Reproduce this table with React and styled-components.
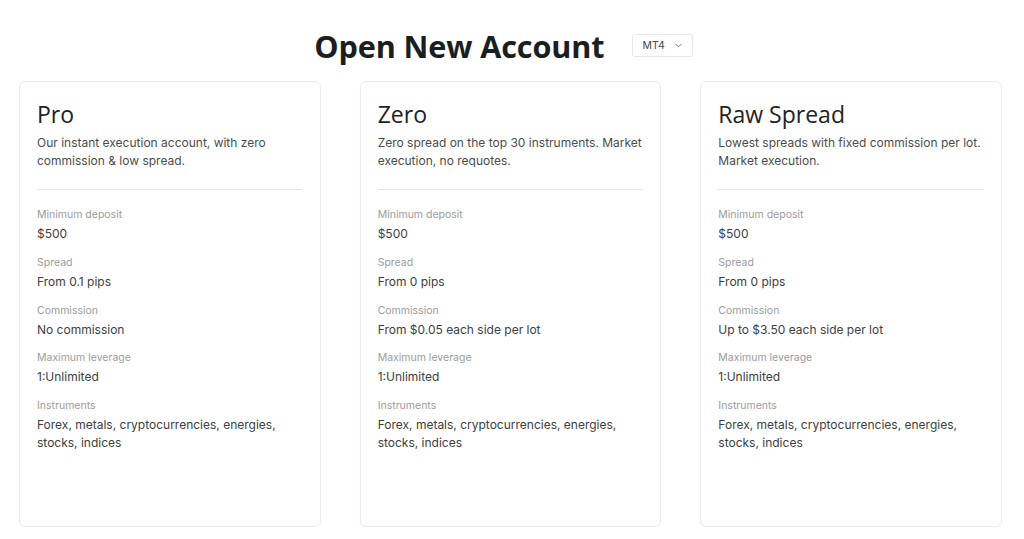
import React from 'react';
import styled, { createGlobalStyle } from 'styled-components';

const GlobalStyle = createGlobalStyle`
  body {
    margin: 0;
    background: #ffffff;
    font-family: 'Inter', 'Liberation Sans', sans-serif;
    color: #333;
  }
`;

const Page = styled.div`
  padding: 0 22px 0 19px;
`;

const Header = styled.div`
  display: flex;
  align-items: center;
  justify-content: center;
  gap: 28px;
  height: 81px;
  padding-right: 14px;
  box-sizing: border-box;
  padding-top: 10px;
`;

const Title = styled.h1`
  margin: 0;
  font-family: 'Open Sans', sans-serif;
  font-weight: 700;
  font-size: 30.6px;
  color: #1b1e20;
  letter-spacing: -0.1px;
`;

const Select = styled.div`
  display: flex;
  align-items: center;
  gap: 9px;
  height: 23px;
  padding: 0 9px;
  border: 1px solid #e6e7e8;
  border-radius: 3px;
  font-size: 10.5px;
  color: #444;
  box-sizing: border-box;
`;

const Grid = styled.div`
  display: grid;
  grid-template-columns: repeat(3, 1fr);
  gap: 39px;
`;

const Card = styled.div`
  height: 446px;
  box-sizing: border-box;
  border: 1px solid #ebecee;
  border-radius: 6px;
  padding: 18px 18px 0 17px;
  box-shadow: 0 1px 2px rgba(0, 0, 0, 0.03);
`;

const CardTitle = styled.h2`
  margin: 0;
  font-family: 'Open Sans', sans-serif;
  font-weight: 500;
  font-size: 23px;
  line-height: 28px;
  color: #1f2224;
`;

const Desc = styled.p`
  margin: 6px 0 0;
  font-size: 12px;
  line-height: 18px;
  color: #4a4d50;
  min-height: 36px;
`;

const Divider = styled.hr`
  margin: 19px 0 18px;
  border: none;
  border-top: 1px solid #e4e5e7;
`;

const Field = styled.div`
  margin-bottom: 12.75px;
`;

const Label = styled.div`
  font-size: 10.5px;
  line-height: 14px;
  color: #9a9c9e;
`;

const Value = styled.div`
  margin-top: 3px;
  font-size: 12px;
  line-height: 18px;
  color: #3d4043;
`;

const accounts = [
  {
    name: 'Pro',
    desc: 'Our instant execution account, with zero commission & low spread.',
    spread: 'From 0.1 pips',
    commission: 'No commission',
  },
  {
    name: 'Zero',
    desc: 'Zero spread on the top 30 instruments. Market execution, no requotes.',
    spread: 'From 0 pips',
    commission: 'From $0.05 each side per lot',
  },
  {
    name: 'Raw Spread',
    desc: 'Lowest spreads with fixed commission per lot. Market execution.',
    spread: 'From 0 pips',
    commission: 'Up to $3.50 each side per lot',
  },
];

function Chevron() {
  return (
    <svg width="9" height="9" viewBox="0 0 10 10" fill="none">
      <path d="M2 3.5L5 6.5L8 3.5" stroke="#777" strokeWidth="1.1" />
    </svg>
  );
}

export default function App() {
  return (
    <>
      <GlobalStyle />
      <Page>
        <Header>
          <Title>Open New Account</Title>
          <Select>
            MT4
            <Chevron />
          </Select>
        </Header>
        <Grid>
          {accounts.map((a) => (
            <Card key={a.name}>
              <CardTitle>{a.name}</CardTitle>
              <Desc>{a.desc}</Desc>
              <Divider />
              <Field>
                <Label>Minimum deposit</Label>
                <Value>$500</Value>
              </Field>
              <Field>
                <Label>Spread</Label>
                <Value>{a.spread}</Value>
              </Field>
              <Field>
                <Label>Commission</Label>
                <Value>{a.commission}</Value>
              </Field>
              <Field>
                <Label>Maximum leverage</Label>
                <Value>1:Unlimited</Value>
              </Field>
              <Field>
                <Label>Instruments</Label>
                <Value>Forex, metals, cryptocurrencies, energies, stocks, indices</Value>
              </Field>
            </Card>
          ))}
        </Grid>
      </Page>
    </>
  );
}
